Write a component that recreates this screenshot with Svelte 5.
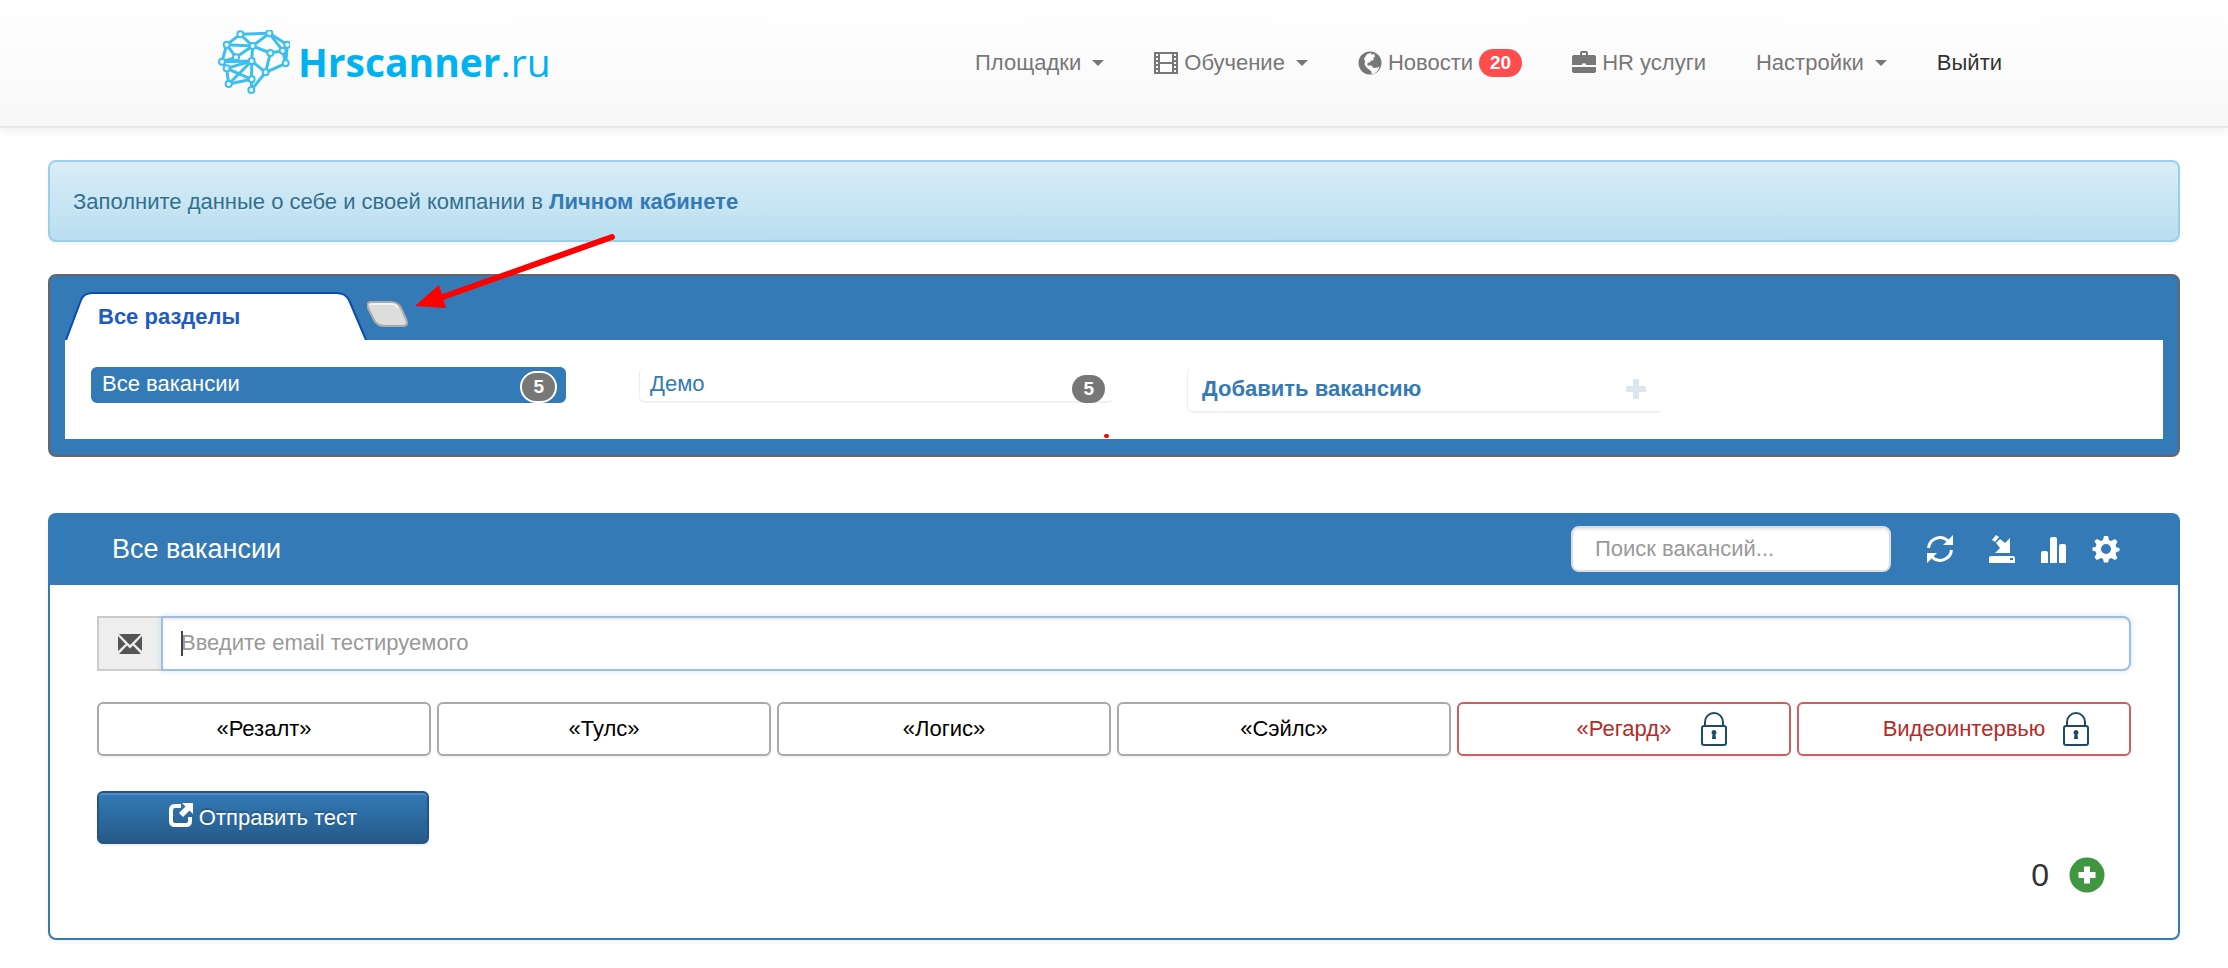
<script lang="ts">
  const menu = [
    { label: "Площадки", icon: "", caret: true },
    { label: "Обучение", icon: "film", caret: true },
    { label: "Новости", icon: "globe", badge: 20 },
    { label: "HR услуги", icon: "briefcase" },
    { label: "Настройки", icon: "", caret: true },
    { label: "Выйти", icon: "", active: true },
  ];

  const tests = [
    { label: "«Резалт»" },
    { label: "«Тулс»" },
    { label: "«Логис»" },
    { label: "«Сэйлс»" },
    { label: "«Регард»", locked: true, spaced: true },
    { label: "Видеоинтервью", locked: true },
  ];

  // brain logo: nodes and the links between them
  const nodes = [
    [121, 73], [208, 70], [80, 104], [262, 104], [158, 108], [211, 129],
    [248, 122], [66, 155], [108, 142], [155, 153], [80, 175], [257, 160],
    [197, 187], [86, 222], [155, 208], [154, 240],
  ];
  const links = [
    [0, 1], [0, 2], [0, 4], [1, 4], [1, 3], [1, 6], [2, 4], [2, 7], [2, 8],
    [4, 8], [4, 9], [4, 5], [5, 6], [3, 6], [3, 11], [6, 11], [5, 12],
    [11, 12], [7, 8], [7, 9], [7, 10], [9, 10], [9, 12], [9, 14],
    [9, 13], [10, 13], [10, 14], [13, 14], [14, 15], [12, 15],
  ];

  let search = "";
  let email = "";
</script>

<header>
  <div class="container">
    <a class="logo" href="#home">
      <svg class="brain" viewBox="54 60 216 192" aria-hidden="true">
        {#each links as [a, b]}
          <line x1={nodes[a][0]} y1={nodes[a][1]} x2={nodes[b][0]} y2={nodes[b][1]} />
        {/each}
        {#each nodes as [x, y]}
          <circle cx={x} cy={y} r="9" />
        {/each}
      </svg>
      <span class="logo-text"><b>Hrscanner</b>.ru</span>
    </a>
    <nav>
      {#each menu as item}
        <a href="#menu" class:active={item.active}>
          {#if item.icon === "film"}
            <svg class="icon" viewBox="0 0 24 24" aria-hidden="true">
              <path fill-rule="evenodd" d="M0 1h24v22H0zM6 3v8h12V3zM6 13v8h12v-8zM2 3v2h2V3zM2 7v2h2V7zM2 11v2h2v-2zM2 15v2h2v-2zM2 19v2h2v-2zM20 3v2h2V3zM20 7v2h2V7zM20 11v2h2v-2zM20 15v2h2v-2zM20 19v2h2v-2z" />
            </svg>
          {:else if item.icon === "globe"}
            <svg class="icon" viewBox="0 0 24 24" aria-hidden="true">
              <circle cx="12" cy="12" r="11.5" />
              <path fill="#fcfcfc" d="M9 3l4-1 1 2 2-1.500 1 3-2 2 1 1.500-2.500 .5-2 2-2 .5 0 2.500 4 0 2 2.500 4-.5 2-1-1.500 4-3.500 3-2.500 1-1-3.500-4-3-2.500-3.500.5-3-1-3 1.500-2z" />
            </svg>
          {:else if item.icon === "briefcase"}
            <svg class="icon" viewBox="0 0 24 24" aria-hidden="true">
              <path fill-rule="evenodd" d="M8 4V2q0-2 2-2h4q2 0 2 2v2h6q2 0 2 2v8h-10v-1.500h-4V14H0V6q0-2 2-2zM10 4h4V2h-4zM0 16h24v4q0 2-2 2H2q-2 0-2-2z" />
            </svg>
          {/if}
          <span>{item.label}</span>
          {#if item.badge}<span class="badge badge-red">{item.badge}</span>{/if}
          {#if item.caret}<i class="caret"></i>{/if}
        </a>
      {/each}
    </nav>
  </div>
</header>

<main>
  <div class="alert">
    Заполните данные о себе и своей компании в <a href="#profile">Личном кабинете</a>
  </div>

  <section class="groups">
    <div class="tabs">
      <button class="tab" type="button">
        <svg class="tab-shape" viewBox="0 0 302 48" aria-hidden="true">
          <path d="M1 48L16 8Q19 1 27 1H272Q280 1 284 8L301 48" />
        </svg>
        <span>Все разделы</span>
      </button>
      <button class="new-tab" type="button" aria-label="Новый раздел">
        <svg viewBox="2 0 44 28" aria-hidden="true">
          <path d="M6 2H26Q33 2 36 8L41 19Q44 26 38 26H19Q12 26 9 20L3 8Q1 2 6 2Z" />
          <path class="shine" d="M5 5Q5 4 8 4H26Q31 4 33 8" />
        </svg>
      </button>
    </div>
    <div class="vacancies">
      <a class="vacancy selected" href="#all"><span>Все вакансии</span><span class="badge">5</span></a>
      <a class="vacancy" href="#demo"><span>Демо</span><span class="badge">5</span></a>
      <a class="vacancy add" href="#add">
        <span>Добавить вакансию</span>
        <svg viewBox="0 0 22 22" aria-hidden="true"><path d="M8 1h6v7h7v6h-7v7H8v-7H1V8h7z" /></svg>
      </a>
      <i class="dot"></i>
    </div>
    <svg class="arrow" viewBox="0 0 204 76" aria-hidden="true">
      <line x1="198" y1="4" x2="26" y2="65" />
      <path d="M1 73L25 52L32 75Z" />
    </svg>
  </section>

  <section class="panel">
    <div class="panel-heading">
      <h1>Все вакансии</h1>
      <input class="search" type="text" placeholder="Поиск вакансий..." aria-label="Поиск вакансий" bind:value={search} />
      <div class="tools">
        <button type="button" aria-label="Обновить">
          <svg viewBox="0 0 28 28" aria-hidden="true">
            <path class="arc" d="M2.500 13A11.500 11.500 0 0 1 22 6M25.500 15A11.500 11.500 0 0 1 6 22" />
            <path d="M27 0V10H17ZM1 28V18H11Z" />
          </svg>
        </button>
        <button type="button" aria-label="Импорт">
          <svg viewBox="0 0 28 28" aria-hidden="true">
            <path fill-rule="evenodd" d="M4 5L8 0L11 2L7 7ZM8 8L12 4L17 8L22 3V18H7L12 13ZM3 21H25Q27 21 27 23V28H1V23Q1 21 3 21ZM22 23V25H25V23Z" />
          </svg>
        </button>
        <button type="button" aria-label="Статистика">
          <svg viewBox="0 0 28 28" aria-hidden="true">
            <path d="M1 28V18Q1 16 3 16H6Q8 16 8 18V28ZM10 28V4Q10 2 12 2H15Q17 2 17 4V28ZM19 28V11Q19 9 21 9H24Q26 9 26 11V28Z" />
          </svg>
        </button>
        <button type="button" aria-label="Настройки">
          <svg viewBox="0 0 28 28" aria-hidden="true">
            <path fill-rule="evenodd" d="M12 1h4l1 4 2 1 4-2 2.500 2.500-2 4 1 2 3 .5v3l-3 1-1 2 2 4L23 25l-4-2-2 1-1 3.500h-4L11 24l-2-1-4 2-2.500-2.500 2-4-1-2-3-1v-3l3-.5 1-2-2-4L5 4l4 2 2-1zM14 9a5 5 0 1 0 0 10a5 5 0 1 0 0-10z" />
          </svg>
        </button>
      </div>
    </div>

    <form class="panel-body" on:submit|preventDefault>
      <div class="email-group">
        <label for="email" aria-label="Email">
          <svg viewBox="0 0 24 20" aria-hidden="true">
            <path d="M1 0H23L12 11ZM0 2L7.500 10L0 17ZM24 2L16.500 10L24 17ZM1 20L9 11.500L12 14.500L15 11.500L23 20Z" />
          </svg>
        </label>
        <div class="email-box">
          <input id="email" type="email" placeholder="Введите email тестируемого" bind:value={email} />
        </div>
      </div>

      <div class="tests">
        {#each tests as test}
          <button type="button" class:locked={test.locked} class:spaced={test.spaced}>
            <span>{test.label}</span>
            {#if test.locked}
              <svg viewBox="0 0 26 34" aria-hidden="true">
                <rect x="1" y="14" width="24" height="19" rx="2" />
                <path d="M4 14V10A9 9 0 0 1 22 10V14" />
                <path class="hole" d="M13 18a2.500 2.500 0 0 1 1.500 4.500L15 27H11L11.500 22.500A2.500 2.500 0 0 1 13 18Z" />
              </svg>
            {/if}
          </button>
        {/each}
      </div>

      <button class="send" type="submit">
        <svg viewBox="0 0 24 24" aria-hidden="true">
          <path class="stroke" d="M12 3H6Q2 3 2 7V18Q2 22 6 22H17Q21 22 21 18V14" />
          <path d="M13 0H24V11L20.500 7.500L14 14L10 10L16.500 3.500Z" />
        </svg>
        <span>Отправить тест</span>
      </button>

      <div class="total">
        <span>0</span>
        <button type="button" aria-label="Добавить">
          <svg viewBox="0 0 36 36" aria-hidden="true">
            <circle cx="18" cy="18" r="17.500" />
            <path d="M15 9.500h6V15h5.500v6H21v5.500h-6V21H9.500v-6H15z" />
          </svg>
        </button>
      </div>
    </form>
  </section>
</main>

<style>
  :global(body) {
    background: #fff;
    color: #333;
    font-family: "Liberation Sans", Arial, sans-serif;
    font-size: 22px;
    line-height: 32px;
  }

  a {
    color: #337ab7;
    text-decoration: none;
  }

  button,
  input {
    box-sizing: border-box;
    font: inherit;
    margin: 0;
  }

  button {
    cursor: pointer;
  }

  svg {
    display: block;
    flex: none;
    fill: currentColor;
  }

  header {
    background: linear-gradient(#fff, #f8f8f8);
    border-bottom: 2px solid #e7e7e7;
    box-shadow: 0 2px 10px rgba(0, 0, 0, 0.075);
  }

  .container {
    display: flex;
    justify-content: space-between;
    align-items: center;
    height: 126px;
    padding: 0 226px 0 218px;
  }

  .logo {
    display: flex;
    align-items: center;
    gap: 8px;
    padding-bottom: 2px;
    color: #00b3f0;
  }

  .brain {
    width: 72px;
    height: 64px;
  }

  .brain line {
    stroke: #3bbfee;
    stroke-width: 9;
  }

  .brain circle {
    fill: #fff;
    stroke: #3bbfee;
    stroke-width: 6;
  }

  .logo-text {
    font-family: "Open Sans", sans-serif;
    font-size: 39px;
    line-height: 64px;
  }

  nav {
    display: flex;
    gap: 50px;
  }

  nav a {
    display: flex;
    align-items: center;
    gap: 6px;
    color: #777;
  }

  nav a.active {
    color: #333;
  }

  .icon {
    width: 24px;
    height: 24px;
  }

  .caret {
    margin-left: 5px;
    border: 6px solid transparent;
    border-top-color: currentColor;
    border-bottom: 0;
  }

  .badge {
    padding: 0 11px;
    border-radius: 16px;
    background: #777;
    color: #fff;
    font-size: 19px;
    font-weight: bold;
    line-height: 28px;
  }

  .badge-red {
    background: #ff4c4c;
  }

  main {
    padding: 32px 48px 28px;
  }

  .alert {
    padding: 24px 23px 22px;
    border: 2px solid #9acfea;
    border-radius: 8px;
    background: linear-gradient(#d9edf7, #b9def0);
    box-shadow: 0 2px 4px rgba(0, 0, 0, 0.05);
    color: #31708f;
    text-shadow: 0 2px 0 rgba(255, 255, 255, 0.2);
  }

  .alert a {
    font-weight: bold;
  }

  .groups {
    position: relative;
    margin-top: 32px;
    padding: 16px 15px;
    border: 2px solid #666;
    border-radius: 8px;
    background: #337ab7;
  }

  .tabs {
    display: flex;
    align-items: flex-start;
  }

  .tab {
    position: relative;
    width: 302px;
    height: 48px;
    padding: 2px 33px 0;
    border: 0;
    background: none;
    color: #1f5bc4;
    font-weight: bold;
    text-align: left;
  }

  .tab span {
    position: relative;
  }

  .tab-shape {
    position: absolute;
    inset: 0;
    fill: #fff;
    stroke: #0b4bb0;
    stroke-width: 2;
  }

  .new-tab {
    margin-top: 8px;
    padding: 0;
    border: 0;
    background: none;
  }

  .new-tab svg {
    width: 44px;
    height: 28px;
    fill: #ddd;
    stroke: #aaa;
    stroke-width: 2;
  }

  .new-tab .shine {
    fill: none;
    stroke: #f4f4f4;
  }

  .vacancies {
    position: relative;
    display: flex;
    align-items: flex-start;
    gap: 73px;
    padding: 27px 26px 26px;
    background: #fff;
  }

  .vacancy {
    display: flex;
    justify-content: space-between;
    box-sizing: border-box;
    width: 475px;
    height: 36px;
    padding: 0 8px 0 10px;
    border: 1px solid #fff;
    border-left-color: #eee;
    border-bottom: 2px solid #f0f0f0;
    border-radius: 6px;
  }

  .vacancy .badge {
    box-sizing: border-box;
    align-self: flex-end;
    margin-bottom: -2px;
  }

  .vacancy.selected {
    border-color: #337ab7;
    background: #337ab7;
    color: #fff;
  }

  .selected .badge {
    border: 2px solid #fff;
  }

  .vacancy.add {
    align-items: center;
    height: 46px;
    padding: 0 14px 2px;
    font-weight: bold;
  }

  .add svg {
    width: 22px;
    height: 22px;
    fill: #dbe6f2;
  }

  .dot {
    position: absolute;
    left: 1039px;
    bottom: 1px;
    width: 5px;
    height: 4px;
    border-radius: 2px;
    background: #f00;
  }

  .arrow {
    position: absolute;
    top: -43px;
    left: 364px;
    width: 204px;
    height: 76px;
    fill: #f00;
    pointer-events: none;
  }

  .arrow line {
    stroke: #f00;
    stroke-width: 6;
    stroke-linecap: round;
  }

  .panel {
    margin-top: 56px;
    border: 2px solid #337ab7;
    border-radius: 8px;
    box-shadow: 0 2px 4px rgba(0, 0, 0, 0.05);
  }

  .panel-heading {
    display: flex;
    align-items: center;
    height: 68px;
    padding: 0 58px 2px 62px;
    background: #337ab7;
    color: #fff;
  }

  h1 {
    flex: 1;
    margin: 0;
    font-size: 27px;
    font-weight: normal;
  }

  .search {
    width: 320px;
    height: 46px;
    padding: 0 22px;
    border: 2px solid #ddd;
    border-radius: 8px;
    box-shadow: inset 0 2px 2px rgba(0, 0, 0, 0.075);
  }

  input::placeholder {
    color: #999;
  }

  .tools {
    display: flex;
    gap: 24px;
    margin-left: 35px;
  }

  .tools button {
    padding: 0;
    border: 0;
    background: none;
    color: #fff;
  }

  .tools button:first-child {
    margin-right: 10px;
  }

  .tools svg {
    width: 28px;
    height: 28px;
  }

  .stroke,
  .arc {
    fill: none;
    stroke: currentColor;
    stroke-width: 4;
  }

  .arc {
    stroke-width: 3;
  }

  .panel-body {
    padding: 31px 47px 45px;
  }

  .email-group {
    display: flex;
  }

  .email-group label {
    display: flex;
    align-items: center;
    justify-content: center;
    width: 62px;
    border: 2px solid #ccc;
    border-right: 0;
    background: #eee;
    color: #555;
  }

  .email-group label svg {
    width: 24px;
    height: 20px;
  }

  .email-box {
    position: relative;
    flex: 1;
  }

  /* text cursor of the empty field */
  .email-box::before {
    content: "";
    position: absolute;
    top: 15px;
    left: 20px;
    width: 2px;
    height: 25px;
    background: #444;
  }

  .email-box input {
    display: block;
    width: 100%;
    height: 55px;
    padding: 0 18px 2px;
    border: 2px solid #9dbfdb;
    border-radius: 0 8px 8px 0;
    box-shadow: inset 0 2px 2px rgba(0, 0, 0, 0.075), 0 0 6px rgba(102, 175, 233, 0.3);
    outline: none;
  }

  .tests {
    display: grid;
    grid-template-columns: repeat(6, 1fr);
    gap: 6px;
    margin-top: 31px;
  }

  .tests button {
    display: grid;
    grid-template-columns: 1fr auto 1fr;
    align-items: center;
    height: 54px;
    padding: 0;
    border: 2px solid #aaa;
    border-radius: 6px;
    background: #fff;
    box-shadow: 0 2px 2px rgba(0, 0, 0, 0.05);
    color: #000;
  }

  .tests span {
    grid-column: 2;
  }

  .tests .locked {
    border-color: #cd5f62;
    color: #b52b27;
  }

  .tests svg {
    width: 26px;
    height: 34px;
    margin-left: 18px;
    fill: none;
    stroke: #1b4b66;
    stroke-width: 2;
  }

  .tests .spaced svg {
    margin-left: 30px;
  }

  .tests .hole {
    fill: #1b4b66;
    stroke: none;
  }

  .send {
    display: flex;
    align-items: center;
    justify-content: center;
    gap: 6px;
    width: 332px;
    height: 53px;
    margin-top: 35px;
    border: 2px solid #245580;
    border-radius: 6px;
    background: linear-gradient(#337ab7, #265a88);
    box-shadow: inset 0 2px 0 rgba(255, 255, 255, 0.15), 0 2px 2px rgba(0, 0, 0, 0.075);
    color: #fff;
    text-shadow: 0 -2px 0 rgba(0, 0, 0, 0.2);
  }

  .send svg {
    width: 24px;
    height: 24px;
    margin-bottom: 6px;
  }

  .total {
    display: flex;
    justify-content: flex-end;
    align-items: center;
    gap: 20px;
    padding: 13px 26px 0 0;
    font-size: 32px;
  }

  .total button {
    padding: 0;
    border: 0;
    background: none;
    color: #419641;
  }

  .total svg {
    width: 36px;
    height: 36px;
  }

  .total path {
    fill: #fff;
  }
</style>
